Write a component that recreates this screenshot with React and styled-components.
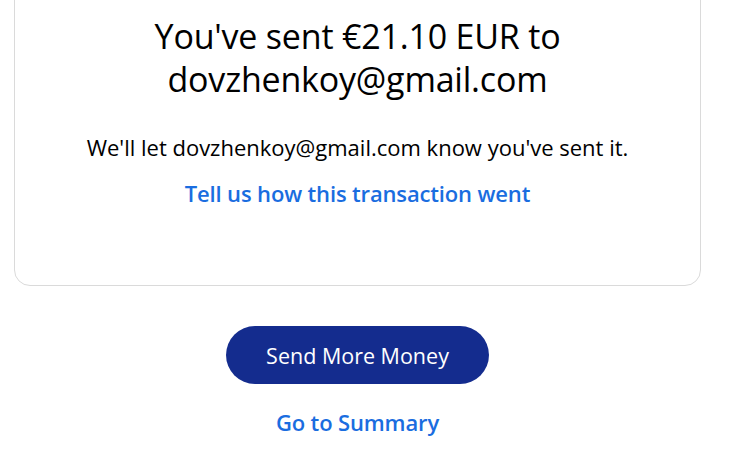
import React from 'react';
import styled, { createGlobalStyle } from 'styled-components';

const GlobalStyle = createGlobalStyle`
  html, body {
    margin: 0;
    padding: 0;
    background: #ffffff;
    font-family: 'Open Sans', 'Liberation Sans', sans-serif;
    color: #000000;
    overflow: hidden;
  }
`;

const Page = styled.div`
  display: flex;
  flex-direction: column;
  padding: 0 50px 0 14px;
`;

// card is scrolled so its top edge sits above the window
const Card = styled.section`
  display: flex;
  flex-direction: column;
  align-items: center;
  margin-top: -40px;
  padding: 54px 24px 78px;
  border: 1px solid #dadada;
  border-radius: 16px;
  text-align: center;
`;

const Heading = styled.h1`
  margin: 0;
  max-width: 480px;
  font-size: 34px;
  line-height: 43px;
  font-weight: 400;
  letter-spacing: -0.2px;
`;

const Note = styled.p`
  margin: 32px 0 0;
  font-size: 22px;
  line-height: 28px;
`;

const TextLink = styled.a`
  margin-top: ${(props) => props.gap || 0}px;
  font-size: 22px;
  line-height: 28px;
  font-weight: 600;
  color: #1a6de0;
  letter-spacing: -0.15px;
  text-decoration: none;
  cursor: pointer;
`;

const Actions = styled.div`
  display: flex;
  flex-direction: column;
  align-items: center;
  margin-top: 40px;
`;

const PrimaryButton = styled.button`
  width: 263px;
  height: 58px;
  border: none;
  border-radius: 29px;
  background: #142c8e;
  color: #ffffff;
  font-family: inherit;
  font-size: 21.5px;
  font-weight: 400;
  cursor: pointer;
`;

const App = () => {
  return (
    <Page>
      <GlobalStyle />
      <Card>
        <Heading>You've sent €21.10 EUR to dovzhenkoy@gmail.com</Heading>
        <Note>We'll let dovzhenkoy@gmail.com know you've sent it.</Note>
        <TextLink gap={18}>Tell us how this transaction went</TextLink>
      </Card>
      <Actions>
        <PrimaryButton>Send More Money</PrimaryButton>
        <TextLink gap={24}>Go to Summary</TextLink>
      </Actions>
    </Page>
  );
};

export default App;
